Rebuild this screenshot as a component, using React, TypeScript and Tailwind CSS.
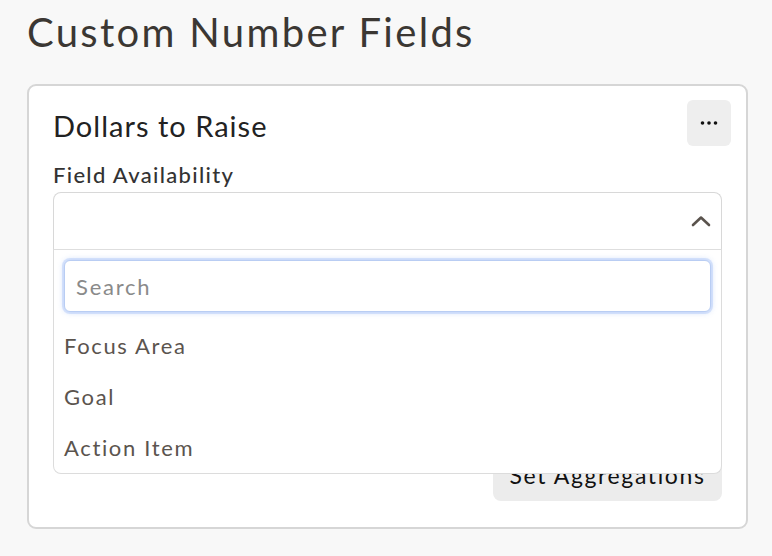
import React from 'react';

const FONT = "font-['Lato','Open_Sans',sans-serif]";

const OPTIONS = ['Focus Area', 'Goal', 'Action Item'];

function MoreButton() {
  return (
    <button className="flex h-[46px] w-[44px] items-center justify-center rounded-md bg-[#eeeeee]">
      <svg width="18" height="4" viewBox="0 0 18 4" fill="#111">
        <circle cx="2.5" cy="2" r="1.8" />
        <circle cx="9" cy="2" r="1.8" />
        <circle cx="15.5" cy="2" r="1.8" />
      </svg>
    </button>
  );
}

function ChevronUp() {
  return (
    <svg width="20" height="12" viewBox="0 0 20 12" fill="none" stroke="#5a534d" strokeWidth="2.6" strokeLinecap="round" strokeLinejoin="round">
      <path d="M2 10 L10 2.5 L18 10" />
    </svg>
  );
}

function Dropdown() {
  return (
    <div className="absolute left-0 right-0 top-full z-10 rounded-b-lg border border-t-0 border-[#dcdcdc] bg-white">
      <div className="border-t border-[#dedede] px-[10px] pt-[10px]">
        <div className="flex h-[52px] items-center rounded-md border border-[#b9cdf3] bg-white px-[11px] shadow-[0_0_0_2px_rgba(160,190,245,0.35),0_0_6px_rgba(120,160,240,0.45)]">
          <span className="text-[22px] tracking-[0.08em] text-[#8a8a8a]">Search</span>
        </div>
      </div>
      <ul className="mt-[8px]">
        {OPTIONS.map((o) => (
          <li key={o} className="flex h-[51px] items-center px-[10px] text-[22px] tracking-[0.075em] text-[#5b544e]">
            {o}
          </li>
        ))}
      </ul>
    </div>
  );
}

export default function App() {
  return (
    <div className={`min-h-[556px] w-full bg-[#f8f8f8] pl-[27px] pr-[24px] pt-[10px] ${FONT}`}>
      <h1 className="text-[40px] leading-[44px] tracking-[0.058em] text-[#3b3733]">Custom Number Fields</h1>
      <div className="mt-[30px] rounded-[9px] border-2 border-[#d6d6d6] bg-white pb-[26px] pl-[24px] pr-[24px] pt-[14px]">
        <div className="flex items-start justify-between">
          <h2 className="pt-[9px] text-[29px] leading-[34px] tracking-[0.035em] text-[#222222]">Dollars to Raise</h2>
          <div className="-mr-[9px]">
            <MoreButton />
          </div>
        </div>
        <div className="mt-[15px] text-[22px] font-medium leading-[28px] tracking-[0.06em] text-[#333333]">Field Availability</div>
        <div className="relative mt-[3px]">
          <div className="flex h-[57px] items-center justify-end rounded-t-lg border border-b-0 border-[#d8d8d8] pr-[10px]">
            <ChevronUp />
          </div>
          <Dropdown />
        </div>
        <div className="h-[200px]" />
        <div className="flex justify-end">
          <button className="h-[52px] w-[229px] rounded-lg bg-[#ececec] text-[23px] tracking-[0.07em] text-[#111111]">Set Aggregations</button>
        </div>
      </div>
    </div>
  );
}
